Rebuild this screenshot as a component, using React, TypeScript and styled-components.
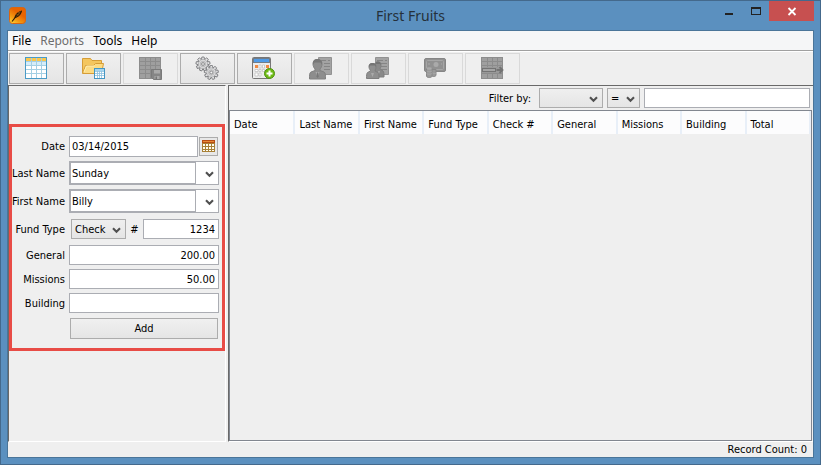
import React, { useId, useState } from "react";
import styled, { createGlobalStyle, css } from "styled-components";

const ui = `"DejaVu Sans Condensed", "DejaVu Sans", sans-serif`;
const chrome = `"Noto Sans", "Open Sans", sans-serif`;
const line = "#abadb3";
const dark = "#696969";

const GlobalStyle = createGlobalStyle`
  *, *::before, *::after { box-sizing: border-box; }
  body { margin: 0; }
  button, input, select { font: inherit; color: inherit; margin: 0; border-radius: 0; }
`;

const Window = styled.div`
  display: flex;
  flex-direction: column;
  min-height: 100vh;
  padding: 0 6px 6px;
  border: 1px solid #44698c;
  background: #5b90bf;
  font: 11px/14px ${ui};
  color: #000;
`;

const TitleBar = styled.header`
  display: grid;
  grid-template-columns: 1fr auto 1fr;
  height: 29px;
`;

const AppMark = styled.div`
  padding: 6px 0 0 2px;
  svg { display: block; }
`;

const Title = styled.h1`
  margin: 0;
  font: 400 14px/29px ${chrome};
  color: #25303a;
`;

const WindowButtons = styled.div`
  display: flex;
  justify-content: flex-end;
  align-items: flex-start;
`;

const WindowButton = styled.button<{ $close?: boolean }>`
  width: ${(p) => (p.$close ? 45 : 27)}px;
  height: 20px;
  padding: 0;
  border: 0;
  background: ${(p) => (p.$close ? "#c75050" : "transparent")};
  svg { display: block; margin: 0 auto; }
`;

const Client = styled.div`
  flex: 1;
  display: flex;
  flex-direction: column;
  border: 1px solid #4a7599;
  background: #efefef;
`;

const MenuBar = styled.nav`
  display: flex;
  gap: 9px;
  height: 20px;
  padding-left: 4px;
  background: #f5f6f7;
  border-bottom: 1px solid #a0a0a0;
`;

const MenuItem = styled.button`
  padding: 0;
  border: 0;
  background: none;
  font: 12px/19px ${chrome};
  color: #000;
  &:disabled { color: #6d6d6d; }
`;

const ToolBar = styled.div`
  display: flex;
  gap: 2px;
  padding: 1px 1px;
  border-top: 1px solid #fff;
`;

const ToolButton = styled.button`
  display: grid;
  place-items: center;
  width: 55px;
  height: 31px;
  padding: 0 2px 2px 0;
  border: 1px solid #acacac;
  background: linear-gradient(#f0f0f0, #e5e5e5);
  svg { display: block; }
  &:disabled { border-color: #d9d9d9; background: #efefef; }
`;

const Workspace = styled.main`
  flex: 1;
  display: grid;
  grid-template-columns: 218px 1fr;
  gap: 2px;
`;

const pane = css`
  border-top: 1px solid ${dark};
  border-left: 1px solid ${dark};
  border-bottom: 1px solid #fff;
`;

const EntryPane = styled.section`
  ${pane}
  padding-top: 38px;
  border-right: 1px solid #fff;
`;

const RecordsPane = styled.section`
  ${pane}
  display: flex;
  flex-direction: column;
  min-width: 0;
`;

const EntryForm = styled.form`
  display: flex;
  flex-direction: column;
  padding: 9px 3px 9px 1px;
  border: 3px solid #e84c46;
  width: 216px;
`;

const Row = styled.div<{ $top?: number }>`
  display: grid;
  grid-template-columns: 52px 150px;
  justify-content: end;
  column-gap: 4px;
  align-items: center;
  margin-top: ${(p) => p.$top ?? 4}px;
`;

const Label = styled.label`
  padding-top: 1px;
  text-align: right;
  white-space: nowrap;
  justify-self: end;
`;

const Field = styled.div<{ $indent?: number }>`
  display: flex;
  align-items: center;
  min-width: 0;
  padding-left: ${(p) => p.$indent ?? 0}px;
`;

const TextBox = styled.input<{ $tall?: boolean; $right?: boolean }>`
  flex: 1;
  min-width: 0;
  height: ${(p) => (p.$tall ? 21 : 20)}px;
  padding: 0 3px 0 2px;
  border: 1px solid ${line};
  background: #fff;
  text-align: ${(p) => (p.$right ? "right" : "left")};
  outline: none;
`;

const DateButton = styled.button`
  display: grid;
  place-items: center;
  width: 19px;
  height: 19px;
  margin: 0 1px;
  padding: 0;
  border: 1px solid #acacac;
  background: #e8e8e8;
  svg { display: block; }
`;

const Combo = styled.div`
  display: flex;
  flex: 1;
  height: 24px;
  border: 1px solid ${line};
  background: #fff;
`;

const ComboInput = styled.input`
  flex: 1;
  min-width: 0;
  padding: 1px 1px 0;
  border: 1px solid ${line};
  background: #fff;
  outline: none;
`;

const ComboButton = styled.button`
  display: grid;
  place-items: center;
  width: 22px;
  padding: 2px 0 0 4px;
  border: 0;
  background: #fff;
  color: #505050;
`;

const Picker = styled.span<{ $width: number }>`
  position: relative;
  display: block;
  width: ${(p) => p.$width}px;
  color: #505050;
  svg { position: absolute; right: 5px; top: 8px; pointer-events: none; }
`;

const Select = styled.select`
  appearance: none;
  display: block;
  width: 100%;
  height: 20px;
  padding: 1px 3px 0;
  border: 1px solid #acacac;
  background: linear-gradient(#efefef, #e5e5e5);
  color: #000;
  outline: none;
`;

const NumberMark = styled.label`
  width: 17px;
  padding-top: 1px;
  text-align: center;
`;

const AddButton = styled.button`
  height: 21px;
  margin: 5px 1px 0 57px;
  padding: 0;
  border: 1px solid #acacac;
  background: linear-gradient(#f0f0f0, #e5e5e5);
`;

const FilterBar = styled.div`
  display: flex;
  justify-content: flex-end;
  align-items: center;
  gap: 4px;
  height: 24px;
  padding-right: 3px;
`;

const FilterLabel = styled.label`
  padding: 1px 4px 0 0;
`;

const FilterBox = styled(TextBox)`
  flex: 0 0 166px;
`;

const GridFrame = styled.div`
  flex: 1;
  margin-right: 1px;
  border: 1px solid #828790;
`;

const RecordTable = styled.table`
  width: 100%;
  table-layout: fixed;
  border-collapse: collapse;
`;

const HeadCell = styled.th`
  height: 23px;
  padding: 4px 0 0 4px;
  border-right: 2px solid #e8eff8;
  background: #fcfcfd;
  font-weight: 400;
  text-align: left;
  white-space: nowrap;
`;

const StatusBar = styled.footer`
  height: 15px;
  padding: 1px 6px 0 0;
  text-align: right;
`;

const Chevron = () => (
  <svg width="9" height="7" viewBox="0 0 9 7">
    <path d="M1 1.2 4.5 4.7 8 1.2" fill="none" stroke="currentColor" strokeWidth="2.1" />
  </svg>
);

const Logo = () => (
  <svg width="17" height="17" viewBox="0 0 17 17">
    <defs>
      <linearGradient id="ember" x1="0" y1="1" x2="0.7" y2="0">
        <stop offset="0" stopColor="#ffe040" />
        <stop offset="0.35" stopColor="#f39a12" />
        <stop offset="0.7" stopColor="#e86400" />
      </linearGradient>
    </defs>
    <rect x="0.5" y="0.5" width="16" height="16" rx="3" fill="url(#ember)" stroke="#d96510" />
    <path d="M3 14.5 7 9.5" stroke="#2c1b05" strokeWidth="1.2" />
    <path d="M5.500 11C5.500 8 8.500 4.500 13 3.500c0 3-3 7-7.500 7.500z" fill="#2c1b05" />
    <path d="m7.500 9.500 4-5M7.500 7.500l3 .5M9 5.500l2 .7" stroke="#a4661a" strokeWidth=".6" />
  </svg>
);

const Sheet = ({ muted = false }: { muted?: boolean }) => (
  <>
    <rect x="1.5" y="1.5" width="21" height="21" fill={muted ? "#9f9f9f" : "#fff"} stroke={muted ? "#8d8d8d" : "#4a9bc7"} />
    {!muted && <path d="M2 2h20v3H2z" fill="#fbc64b" />}
    {!muted && <path d="M2 5h20v4H2z" fill="#d5edfa" />}
    <path d="M2 5.500h20M2 9.500h20M2 13.500h20M2 17.500h20M7.500 2v20M12.500 2v20M17.500 2v20" stroke={muted ? "#8c8c8c" : "#a4cfe3"} fill="none" />
  </>
);

const TableIcon = () => (
  <svg width="24" height="24" viewBox="0 0 24 24"><Sheet /></svg>
);

const FolderIcon = () => (
  <svg width="24" height="24" viewBox="0 0 24 24">
    <path d="M1.500 17V2.500h8l1.500 2h9.500V17z" fill="#f4c65e" stroke="#d69d37" />
    <path d="m1.500 17.500 3-8h8l2-2h8l-2 10z" fill="#fcdb83" stroke="#d69d37" />
    <path d="m3 16 2.500-6h8" stroke="#fff0b5" fill="none" />
    <rect x="13.500" y="12.500" width="10" height="10" fill="#fff" stroke="#4596c3" />
    <path d="M14 15.500h9M14 17.500h9M14 19.500h9M16.500 15v7M18.500 15v7M20.500 15v7" stroke="#8cc0de" strokeWidth=".8" />
    <path d="M14 13h9v2h-9z" fill="#a4d4ef" />
  </svg>
);

const SaveTableIcon = () => (
  <svg width="24" height="24" viewBox="0 0 24 24">
    <Sheet muted />
    <path d="M13.500 13.500h10v10h-8l-2-2z" fill="#858585" stroke="#7a7a7a" />
    <path d="M16 14h6v3.500h-6zM16.500 20h5v3h-5z" fill="#a9a9a9" />
    <path d="M17.500 20.500h1.500v2.500h-1.500z" fill="#777" />
  </svg>
);

const teeth = [0, 40, 80, 120, 160, 200, 240, 280, 320];

const Gear = ({ x, y }: { x: number; y: number }) => (
  <g transform={`translate(${x} ${y})`}>
    {teeth.map((a) => (
      <path key={a} d="m-1.700-4 .6-3h2.200l.6 3" transform={`rotate(${a})`} fill="#e2e2e3" stroke="#7c7d80" strokeWidth=".9" />
    ))}
    <circle r="4.600" fill="#dcdcdd" stroke="#9b9c9e" strokeWidth=".6" />
    <circle r="2.800" fill="#cfcfd0" stroke="#b0b0b1" strokeWidth=".7" />
    <circle r="1.400" fill="#f5f5f5" stroke="#77787a" strokeWidth=".8" />
  </g>
);

const GearsIcon = () => (
  <svg width="24" height="24" viewBox="0 0 24 24">
    <Gear x={8} y={8} />
    <Gear x={16.300} y={16.500} />
  </svg>
);

const CalculatorIcon = () => (
  <svg width="26" height="24" viewBox="2 0 26 24">
    <rect x="3.500" y="1.500" width="18" height="21" rx="1" fill="#ececec" stroke="#777" />
    <path d="M4 2h17v5H4z" fill="#737d88" />
    <path d="M5 3h15v3H5z" fill="#4f9be8" />
    <path d="M6 9h3v3H6zM17 9h3v3h-3z" fill="#f28a42" />
    <path d="M10 9h2v3h-2zM13.500 9h2v3h-2zM6 13.500h3v2H6zM10 13.500h2v2h-2zM13.500 13.500h2v2h-2zM17 13.500h3v2h-3zM6 17h3v3H6zM10 17h2v3h-2z" fill="#fff" stroke="#aaa" strokeWidth=".5" />
    <circle cx="20.500" cy="17.500" r="5" fill="#6dba13" stroke="#4f9211" />
    <path d="M17.500 17.500h6M20.500 14.500v6" stroke="#fff" strokeWidth="2" />
  </svg>
);

const Report = () => (
  <>
    <path d="M10.500 1.500h13v17h-13z" fill="#a3a3a3" stroke="#929292" />
    <path d="M12 4.500h6M20 4.500h2M16 7.500h6M16 10.500h6M16 13.500h6" stroke="#858585" />
  </>
);

const PersonReportIcon = () => (
  <svg width="26" height="24" viewBox="0 0 26 24">
    <Report />
    <path d="M5 8c0-3 1.500-4.500 4.500-4.500S14 5 14 8c0 2-1 4-2 5v1.500l4 1.500c1.500.7 1.500 3 1.500 7H1.500c0-4 0-6.300 1.500-7l4-1.500V13c-1-1-2-3-2-5z" fill="#8d8d8d" stroke="#808080" />
    <path d="M5 8.500C4.500 4 7 3 9.500 3S14.500 5 14 8.500l-1.500-2h-6z" fill="#777" />
    <path d="m7.500 16 2 5 2-5z" fill="#aaa" />
    <path d="M9 16.500h1.200l.5 4-1.200 1.500-1-1.500z" fill="#777" />
  </svg>
);

const PeopleReportIcon = () => (
  <svg width="26" height="24" viewBox="0 0 26 24">
    <Report />
    <path d="M10 9c0-2 1-3 3-3s3 1 3 3-1 4-1 4l3 2c1 1 1 3 1 6h-9z" fill="#898989" stroke="#7e7e7e" />
    <path d="M4 11c0-2 1-3.500 3.500-3.500S11 9 11 11s-1 3-1 4l3 1.500c1 1 1 3 1 6H1.500c0-3 0-5 1-6L5.500 15c0-1-1.500-2-1.500-4z" fill="#8f8f8f" stroke="#7e7e7e" />
    <path d="M4 11c-.5-3 1-4 3.500-4s4 1 3.500 4l-1-1.500H5zM10.500 8c0-2 1-2.500 2.500-2.500S16 6.500 16 9l-1-1z" fill="#747474" />
    <path d="m6 17 1.500 4L9 17zM13 15l1 3 1-3z" fill="#aaa" />
  </svg>
);

const MoneyIcon = () => (
  <svg width="26" height="24" viewBox="0 0 26 24">
    <rect x="2.500" y="2.500" width="21" height="13" rx="1.500" fill="#919191" stroke="#858585" />
    <rect x="4.500" y="4.500" width="17" height="9" rx="1" fill="none" stroke="#a6a6a6" />
    <circle cx="14" cy="8.500" r="2.500" fill="#aaa" />
    <path d="M6 8h2M19 8h1" stroke="#aaa" />
    <path d="M9.500 13.500V19c0 2 4.500 2 4.500 0v-5.500z" fill="#999" stroke="#878787" />
    <path d="M4.500 12.500V20c0 2 5.500 2 5.500 0v-7.500z" fill="#999" stroke="#878787" />
    <path d="M4.500 15c1 1 4.500 1 5.500 0M4.500 17.500c1 1 4.500 1 5.500 0M10.500 17c1 .7 3 .7 3.500 0" fill="none" stroke="#adadad" strokeWidth=".7" />
    <ellipse cx="7.200" cy="12.500" rx="2.700" ry="1.200" fill="#aaa" />
  </svg>
);

const MoveRowIcon = () => (
  <svg width="26" height="24" viewBox="0 0 26 24">
    <g transform="translate(1 0)"><Sheet muted /></g>
    <path d="M3 11h20v6H3z" fill="#999" />
    <rect x="3.500" y="12.500" width="13" height="3" fill="#a5a5a5" stroke="#737373" />
    <path d="M17.500 14h6.500M20.500 11l3 3-3 3" fill="none" stroke="#737373" strokeWidth="1.800" />
  </svg>
);

const CalendarIcon = () => (
  <svg width="15" height="15" viewBox="0 0 15 15">
    <path d="M1 1h13v12H1z" fill="#a98135" />
    <path d="M1 1h13v3H1z" fill="#b84c13" />
    <path d="M2 2h11v1H2z" fill="#e78b35" />
    <path d="M2 5h2v2H2zM5 5h2v2H5zM8 5h2v2H8zM11 5h2v2h-2zM2 8h2v2H2zM5 8h2v2H5zM8 8h2v2H8zM11 8h2v2h-2zM2 11h2v1H2zM5 11h2v1H5zM8 11h2v1H8zM11 11h2v1h-2z" fill="#fffdf0" />
  </svg>
);

const tools: { name: string; icon: React.ReactNode; off?: boolean }[] = [
  { name: "New", icon: <TableIcon /> },
  { name: "Open", icon: <FolderIcon /> },
  { name: "Save", icon: <SaveTableIcon />, off: true },
  { name: "Settings", icon: <GearsIcon /> },
  { name: "Add totals", icon: <CalculatorIcon /> },
  { name: "Individual report", icon: <PersonReportIcon />, off: true },
  { name: "Group report", icon: <PeopleReportIcon />, off: true },
  { name: "Deposit", icon: <MoneyIcon />, off: true },
  { name: "Move row", icon: <MoveRowIcon />, off: true },
];

const columns = ["Date", "Last Name", "First Name", "Fund Type", "Check #", "General", "Missions", "Building", "Total"];

function NameRow({ label, initial, top }: { label: string; initial: string; top?: number }) {
  const id = useId();
  const [value, setValue] = useState(initial);
  return (
    <Row $top={top}>
      <Label htmlFor={id}>{label}</Label>
      <Combo>
        <ComboInput id={id} value={value} onChange={(e) => setValue(e.target.value)} />
        <ComboButton type="button" aria-label={`${label} list`}><Chevron /></ComboButton>
      </Combo>
    </Row>
  );
}

function AmountRow({ label, initial, top }: { label: string; initial: string; top?: number }) {
  const id = useId();
  return (
    <Row $top={top}>
      <Label htmlFor={id}>{label}</Label>
      <Field><TextBox id={id} $right defaultValue={initial} /></Field>
    </Row>
  );
}

export default function App() {
  return (
    <>
      <GlobalStyle />
      <Window>
        <TitleBar>
          <AppMark><Logo /></AppMark>
          <Title>First Fruits</Title>
          <WindowButtons>
            <WindowButton aria-label="Minimize">
              <svg width="27" height="20" viewBox="0 0 27 20"><path d="M10 12h8v2h-8z" fill="#222" /></svg>
            </WindowButton>
            <WindowButton aria-label="Maximize">
              <svg width="27" height="20" viewBox="0 0 27 20">
                <path d="M9 6h10v8H9zM10 8v5h8V8z" fill="#222" fillRule="evenodd" />
              </svg>
            </WindowButton>
            <WindowButton $close aria-label="Close">
              <svg width="45" height="20" viewBox="0 0 45 20">
                <path d="m19.500 7 7 7M26.500 7l-7 7" stroke="#fff" strokeWidth="1.800" />
              </svg>
            </WindowButton>
          </WindowButtons>
        </TitleBar>
        <Client>
          <MenuBar>
            <MenuItem>File</MenuItem>
            <MenuItem disabled>Reports</MenuItem>
            <MenuItem>Tools</MenuItem>
            <MenuItem>Help</MenuItem>
          </MenuBar>
          <ToolBar role="toolbar">
            {tools.map((t) => (
              <ToolButton key={t.name} aria-label={t.name} disabled={t.off}>{t.icon}</ToolButton>
            ))}
          </ToolBar>
          <Workspace>
            <EntryPane>
              <EntryForm onSubmit={(e) => e.preventDefault()}>
                <Row $top={0}>
                  <Label htmlFor="date">Date</Label>
                  <Field>
                    <TextBox id="date" $tall defaultValue="03/14/2015" />
                    <DateButton type="button" aria-label="Pick a date"><CalendarIcon /></DateButton>
                  </Field>
                </Row>
                <NameRow label="Last Name" initial="Sunday" />
                <NameRow label="First Name" initial="Billy" />
                <Row $top={6}>
                  <Label htmlFor="fund">Fund Type</Label>
                  <Field $indent={2}>
                    <Picker $width={55}>
                      <Select id="fund" defaultValue="Check">
                        <option>Check</option>
                        <option>Cash</option>
                      </Select>
                      <Chevron />
                    </Picker>
                    <NumberMark htmlFor="number">#</NumberMark>
                    <TextBox id="number" $right defaultValue="1234" />
                  </Field>
                </Row>
                <AmountRow label="General" initial="200.00" top={6} />
                <AmountRow label="Missions" initial="50.00" />
                <AmountRow label="Building" initial="" />
                <AddButton type="submit">Add</AddButton>
              </EntryForm>
            </EntryPane>
            <RecordsPane>
              <FilterBar>
                <FilterLabel htmlFor="filter">Filter by:</FilterLabel>
                <Picker $width={64}>
                  <Select id="filter"><option></option></Select>
                  <Chevron />
                </Picker>
                <Picker $width={33}>
                  <Select aria-label="Comparison"><option>=</option></Select>
                  <Chevron />
                </Picker>
                <FilterBox aria-label="Filter value" />
              </FilterBar>
              <GridFrame>
                <RecordTable>
                  <thead>
                    <tr>{columns.map((c) => <HeadCell key={c} scope="col">{c}</HeadCell>)}</tr>
                  </thead>
                  <tbody />
                </RecordTable>
              </GridFrame>
            </RecordsPane>
          </Workspace>
          <StatusBar>Record Count: 0</StatusBar>
        </Client>
      </Window>
    </>
  );
}
